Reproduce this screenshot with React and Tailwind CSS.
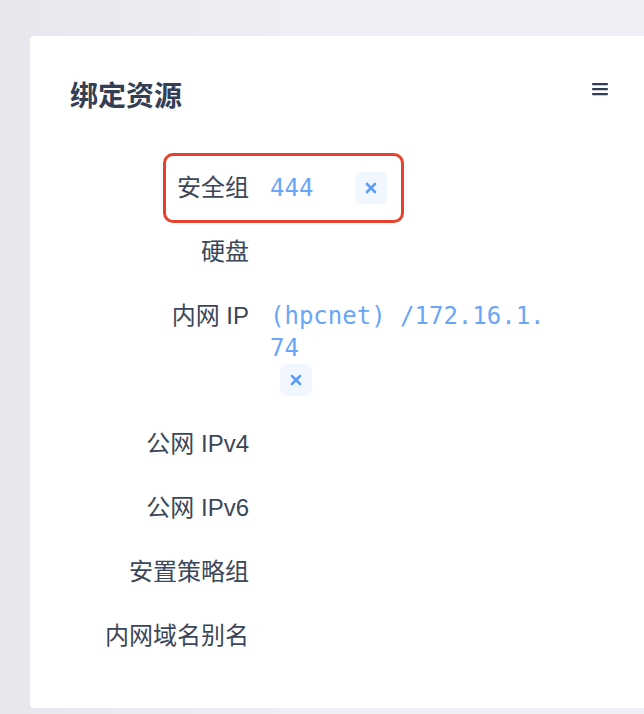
const rows = [
  { label: '安全组', value: '444', close: 'inline', mark: true },
  { label: '硬盘' },
  { label: '内网 IP', value: '(hpcnet) /172.16.1.74', close: 'block' },
  { label: '公网 IPv4' },
  { label: '公网 IPv6' },
  { label: '安置策略组' },
  { label: '内网域名别名' },
];

const CloseBtn = ({ className }) => (
  <button className={`w-8 h-8 rounded-md bg-[#f2f7ff] flex items-center justify-center ${className}`}>
    <svg width="14" height="14" viewBox="0 0 14 14">
      <path d="M3 3 L11 11 M11 3 L3 11" stroke="#5c9df5" strokeWidth="2.6" strokeLinecap="round" />
    </svg>
  </button>
);

const App = () => {
  return (
    <div className="w-[644px] h-[714px] overflow-hidden bg-[#eef0f5] bg-gradient-to-r from-[#e6e8ee] via-[#eef0f5] to-[#eef0f5] pt-[36px] pl-[30px]" style={{ fontFamily: '"Liberation Sans", "Noto Sans CJK SC", sans-serif' }}>
      <div className="w-[640px] h-[672px] bg-white rounded-sm relative">
        <div className="flex items-start justify-between pl-[40px] pt-[42px] pr-[62px]">
          <h2 className="text-[28px] leading-[38px] font-semibold text-[#343e54]">绑定资源</h2>
          <svg width="16" height="14" viewBox="0 0 16 14" className="mt-[4px]">
            <rect x="0" y="1" width="16" height="2.2" rx="1" fill="#323c55" />
            <rect x="0" y="6" width="16" height="2.2" rx="1" fill="#323c55" />
            <rect x="0" y="11" width="16" height="2.2" rx="1" fill="#323c55" />
          </svg>
        </div>
        <div className="mt-[56px] flex flex-col gap-8">
          {rows.map(r => (
            <div key={r.label} className="flex items-start relative">
              <div className="w-[219px] text-right text-[24px] leading-[32px] text-[#3b4759] shrink-0">{r.label}</div>
              <div className="ml-[21px] w-[282px] text-[24px] leading-[32px] text-[#6aa6f7] break-all" style={{ fontFamily: '"DejaVu Sans Mono", monospace' }}>
                {r.close === 'inline' && (
                  <div className="flex items-center">
                    <span>{r.value}</span>
                    <CloseBtn className="ml-[42px]" />
                  </div>
                )}
                {r.close === 'block' && (
                  <div>
                    <div>{r.value}</div>
                    <CloseBtn className="ml-[10px]" />
                  </div>
                )}
              </div>
              {r.mark && (
                <div className="absolute left-[133px] top-[-19px] w-[241px] h-[70px] border-[3.5px] border-[#e5412b] rounded-[10px]" />
              )}
            </div>
          ))}
        </div>
      </div>
    </div>
  );
};

export default App;
